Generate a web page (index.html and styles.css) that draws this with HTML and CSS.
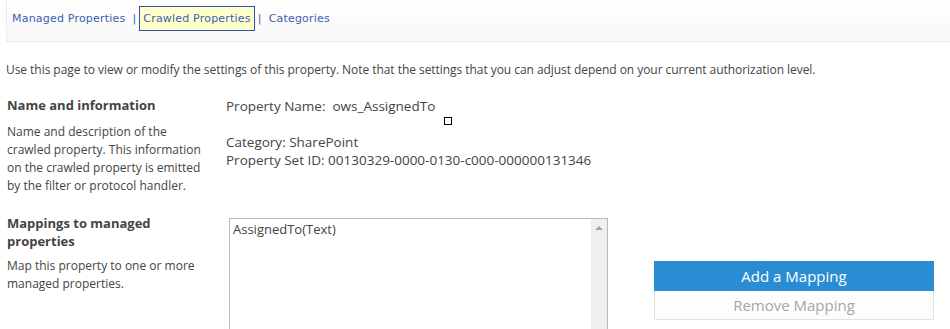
FILE: index.html
```html
<!DOCTYPE html>
<html lang="en">
<head>
    <meta charset="UTF-8">
    <title>Crawled Property</title>
    <link rel="stylesheet" href="styles.css">
</head>
<body>

<div id="nav">
    <a href="#">Managed Properties</a>
    <span class="sep">|</span>
    <a href="#" class="atual">Crawled Properties</a>
    <span class="sep">|</span>
    <a href="#">Categories</a>
</div>

<p id="intro">Use this page to view or modify the settings of this property. Note that the settings that you can adjust depend on your current authorization level.</p>

<div class="secao">
    <div class="lado">
        <h3>Name and information</h3>
        <p>Name and description of the crawled property. This information on the crawled property is emitted by the filter or protocol handler.</p>
    </div>
    <div class="campos">
        <div class="linha">Property Name:&nbsp; ows_AssignedTo<span class="caixa"></span></div>
        <div class="linha espaco">Category: SharePoint</div>
        <div class="linha">Property Set ID: 00130329-0000-0130-c000-000000131346</div>
    </div>
</div>

<div class="secao" id="mapeamento">
    <div class="lado">
        <h3>Mappings to managed properties</h3>
        <p>Map this property to one or more managed properties.</p>
    </div>
    <div class="lista">
        <div class="itens">AssignedTo(Text)</div>
        <div class="rolagem"><span class="seta"></span></div>
    </div>
    <div class="botoes">
        <button id="adicionar">Add a Mapping</button>
        <button id="remover" disabled>Remove Mapping</button>
    </div>
</div>

</body>
</html>
```

FILE: styles.css
```css
body{
    margin: 0;
    font-family: "Open Sans", "Noto Sans", sans-serif;
    color: #444;
    background: #fff;
}
#nav{
    margin-left: 6px;
    height: 42px;
    box-sizing: border-box;
    border-left: 1px solid #ececec;
    border-bottom: 1px solid #ececec;
    background: linear-gradient(#ffffff, #f7f7f7);
    display: flex;
    align-items: center;
    padding-left: 1px;
    padding-bottom: 4px;
    font-family: "DejaVu Sans", Verdana, sans-serif;
    font-size: 11px;
    letter-spacing: 0.2px;
}
#nav a{
    color: #3b5fb0;
    text-decoration: none;
    padding: 5px 3px;
    border: 1px solid transparent;
}
#nav .atual{
    background-color: #ffffcc;
    border-color: #2b55a8;
}
.sep{
    color: #3b5fb0;
    margin: 0 3px;
}
#intro{
    font-size: 12px;
    letter-spacing: -0.05px;
    margin: 19px 6px 0;
    line-height: 18px;
}
.secao{
    display: flex;
    margin-left: 7px;
}
.lado{
    width: 200px;
    flex-shrink: 0;
}
.lado h3{
    font-size: 13px;
    font-weight: bold;
    margin: 17px 0 9px;
    line-height: 18px;
}
.lado p{
    font-size: 12px;
    line-height: 18px;
    margin: 0;
}
.campos{
    padding: 18px 0 0 19px;
    font-size: 13.5px;
}
.linha{
    line-height: 18px;
}
.espaco{
    margin-top: 18px;
}
.caixa{
    display: inline-block;
    width: 6px;
    height: 6px;
    border: 1px solid #000;
    margin-left: 9px;
    position: relative;
    top: 14px;
}
#mapeamento{
    margin-top: 2px;
}
#mapeamento h3{
    margin-bottom: 7px;
}
.lista{
    margin: 21px 0 0 22px;
    width: 379px;
    height: 111px;
    box-sizing: border-box;
    border: 1px solid #a8bfd3;
    border-bottom: none;
    display: flex;
}
.itens{
    flex: 1;
    font-size: 13px;
    padding: 1px 3px;
}
.rolagem{
    width: 16px;
    background: #f0f0f0;
    display: flex;
    justify-content: center;
}
.seta{
    margin-top: 7px;
    width: 0;
    height: 0;
    border-left: 4px solid transparent;
    border-right: 4px solid transparent;
    border-bottom: 4px solid #a3a3a3;
}
.botoes{
    margin: 64px 0 0 46px;
    width: 280px;
    display: flex;
    flex-direction: column;
}
button{
    font-family: "Open Sans", "Noto Sans", sans-serif;
    font-size: 15px;
    height: 30px;
    padding: 0;
    border: 1px solid #e1e1e1;
}
#adicionar{
    background-color: #2a8dd4;
    border-color: #2a8dd4;
    color: #fff;
}
#remover{
    background-color: #fdfdfd;
    border-top: none;
    height: 29px;
    color: #a6a6a6;
}
```
